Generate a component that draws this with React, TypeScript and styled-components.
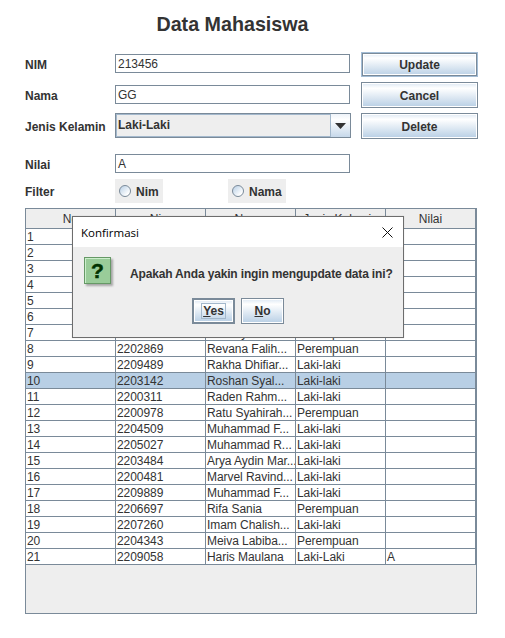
import React from "react";
import styled, { createGlobalStyle } from "styled-components";

const Global = createGlobalStyle`
  html, body {
    margin: 0;
    background: #fff;
  }
  * {
    box-sizing: border-box;
  }
`
const Page = styled.div`
  position: relative;
  width: 505px;
  height: 638px;
  padding: 0 28px 0 25px;
  font-family: "Liberation Sans", Arial, sans-serif;
  font-size: 12px;
  color: #333;
  overflow: hidden;
`
const Title = styled.h1`
  margin: 0;
  height: 52px;
  padding: 13px 37px 0 0;
  text-align: center;
  font-size: 19.7px;
  line-height: 23px;
  font-weight: bold;
  color: #333;
`
const Form = styled.div`
  display: grid;
  grid-template-columns: 90px 246px 117px;
  grid-template-rows: 25px 26px 26px;
  row-gap: 5px;
`
const Label = styled.label<{ $top: number }>`
  padding-top: ${p => p.$top}px;
  font-weight: bold;
  line-height: 14px;
`
const Field = styled.div<{ $top: number }>`
  width: 235px;
  height: 19px;
  margin-top: ${p => p.$top}px;
  padding: 1px 0 0 2px;
  border: 1px solid #7a8a99;
  line-height: 17px;
  background: #fff;
`
const Combo = styled.div`
  display: flex;
  width: 236px;
  height: 25px;
  border: 1px solid #7a8a99;
  background: #eee;
`
const ComboText = styled.div`
  flex: 1;
  padding-left: 1px;
  border: 1px solid #a3b8cc;
  font-weight: bold;
  line-height: 21px;
`
const ComboArrow = styled.div`
  display: flex;
  align-items: center;
  justify-content: center;
  width: 19px;
  background: linear-gradient(#eef3f9, #fff 25%, #c6d8ea);
`
const Button = styled.button<{ $default?: boolean }>`
  display: block;
  width: 117px;
  padding: 1px 0 0;
  border: 1px solid ${p => (p.$default ? "#a3bdd6" : "#7a8a99")};
  box-shadow: ${p => (p.$default ? "inset 0 0 0 1px #7a8a99, inset 0 0 0 2px #fff" : "inset 0 0 0 1px #fff")};
  background: linear-gradient(#dde8f3, #fff 22%, #b8cfe5);
  font: bold 12px "Liberation Sans", Arial, sans-serif;
  color: #333;
`
const NilaiRow = styled.div`
  display: grid;
  grid-template-columns: 90px 235px;
  margin-top: 15px;
`
const FilterRow = styled.div`
  display: grid;
  grid-template-columns: 90px 113px auto;
  justify-content: start;
  margin-top: 6px;
`
const RadioBox = styled.div`
  display: inline-flex;
  align-items: center;
  gap: 5px;
  justify-self: start;
  height: 24px;
  padding: 0 4px;
  background: #eee;
  font-weight: bold;
  line-height: 16px;
`
const RadioDot = styled.span`
  width: 12px;
  height: 12px;
  border: 1px solid #7a8a99;
  border-radius: 50%;
  background: linear-gradient(135deg, #b8cfe5, #fff 80%);
`
const RadioText = styled.span`
  padding-top: 1px;
`
const Pane = styled.div`
  width: 452px;
  height: 406px;
  margin-top: 5px;
  border: 1px solid #7a8a99;
  background: #eee;
`
const Grid = styled.table`
  border-spacing: 0;
  table-layout: fixed;
  width: 450px;
  font-size: 12px;
  color: #333;
`
const Head = styled.th`
  width: 90px;
  height: 20px;
  padding: 1px 0 0;
  border-right: 1px solid #7a8a99;
  border-bottom: 1px solid #7a8a99;
  background: #eee;
  font-weight: normal;
  text-align: center;
`
const Row = styled.tr<{ $selected?: boolean }>`
  background: ${p => (p.$selected ? "#b8cfe5" : "#fff")};
`
const Cell = styled.td`
  height: 16px;
  padding: 1px 0 0 1px;
  border-right: 1px solid #7a8a99;
  border-bottom: 1px solid #7a8a99;
  line-height: 14px;
  letter-spacing: -0.05px;
  white-space: nowrap;
  overflow: hidden;
`
const Dialog = styled.div`
  position: absolute;
  left: 72px;
  top: 216px;
  width: 332px;
  height: 122px;
  border: 1px solid #6d6d6d;
  background: #eee;
  box-shadow: 0 0 1px rgba(0, 0, 0, 0.2);
`
const DialogBar = styled.div`
  display: flex;
  align-items: center;
  justify-content: space-between;
  height: 30px;
  padding: 0 10px 0 8px;
  background: #fff;
  font-family: "Open Sans", "Noto Sans", sans-serif;
  font-size: 11.5px;
  color: #000;
`
const DialogBody = styled.div`
  display: flex;
  align-items: flex-start;
  height: 51px;
  padding: 10px 0 0 11px;
`
const Question = styled.div`
  display: flex;
  align-items: center;
  justify-content: center;
  width: 27px;
  height: 27px;
  border: 1px solid #669966;
  box-shadow: inset 1px 1px 0 #cceecc, 2px 2px 2px rgba(0, 0, 0, 0.3);
  background: #99cc99;
  font: bold 21px "Liberation Sans", Arial, sans-serif;
  -webkit-text-stroke: 0.5px #003300;
  color: #003300;
`
const Message = styled.div`
  margin: 10px 0 0 19px;
  font-weight: bold;
  line-height: 14px;
  letter-spacing: -0.16px;
  white-space: nowrap;
`
const DialogButtons = styled.div`
  display: flex;
  justify-content: center;
  gap: 6px;
`
const SmallButton = styled.button<{ $focus?: boolean }>`
  display: flex;
  align-items: center;
  justify-content: center;
  width: 43px;
  height: 26px;
  padding: 0;
  border: ${p => (p.$focus ? "2px solid #7a8a99" : "1px solid #7a8a99")};
  box-shadow: inset 0 0 0 1px #fff;
  background: linear-gradient(#dde8f3, #fff 22%, #b8cfe5);
  font: bold 12px "Liberation Sans", Arial, sans-serif;
  color: #333;
`
const FocusBox = styled.span<{ $focus?: boolean }>`
  padding: 0 1px;
  border: 1px solid ${p => (p.$focus ? "#a3b8cc" : "transparent")};
  line-height: 14px;
`

const rows = [
  ["1", "2201234", "Adam Pratama", "Laki-laki", ""],
  ["2", "2201567", "Bagas Nugraha", "Laki-laki", ""],
  ["3", "2202345", "Citra Lestari", "Perempuan", ""],
  ["4", "2203456", "Dimas Saputra", "Laki-laki", ""],
  ["5", "2204678", "Eka Putri", "Perempuan", ""],
  ["6", "2205789", "Fajar Ramadhan", "Laki-laki", ""],
  ["7", "2206890", "Nisa Ayu Gita", "Perempuan", ""],
  ["8", "2202869", "Revana Falih...", "Perempuan", ""],
  ["9", "2209489", "Rakha Dhifiar...", "Laki-laki", ""],
  ["10", "2203142", "Roshan Syal...", "Laki-laki", ""],
  ["11", "2200311", "Raden Rahm...", "Laki-laki", ""],
  ["12", "2200978", "Ratu Syahirah...", "Perempuan", ""],
  ["13", "2204509", "Muhammad F...", "Laki-laki", ""],
  ["14", "2205027", "Muhammad R...", "Laki-laki", ""],
  ["15", "2203484", "Arya Aydin Mar...", "Laki-laki", ""],
  ["16", "2200481", "Marvel Ravind...", "Laki-laki", ""],
  ["17", "2209889", "Muhammad F...", "Laki-laki", ""],
  ["18", "2206697", "Rifa Sania", "Perempuan", ""],
  ["19", "2207260", "Imam Chalish...", "Laki-laki", ""],
  ["20", "2204343", "Meiva Labiba...", "Perempuan", ""],
  ["21", "2209058", "Haris Maulana", "Laki-Laki", "A"],
]

function App() {
  return (
    <Page>
      <Global />
      <Title>Data Mahasiswa</Title>
      <Form>
        <Label $top={6}>NIM</Label>
        <Field $top={2}>213456</Field>
        <Button $default>Update</Button>
        <Label $top={7}>Nama</Label>
        <Field $top={3}>GG</Field>
        <Button>Cancel</Button>
        <Label $top={7}>Jenis Kelamin</Label>
        <Combo>
          <ComboText>Laki-Laki</ComboText>
          <ComboArrow>
            <svg width="11" height="6" viewBox="0 0 11 6">
              <path d="M0 0h11L5.5 6z" fill="#333" />
            </svg>
          </ComboArrow>
        </Combo>
        <Button>Delete</Button>
      </Form>
      <NilaiRow>
        <Label $top={4}>Nilai</Label>
        <Field $top={0}>A</Field>
      </NilaiRow>
      <FilterRow>
        <Label $top={6}>Filter</Label>
        <RadioBox>
          <RadioDot />
          <RadioText>Nim</RadioText>
        </RadioBox>
        <RadioBox>
          <RadioDot />
          <RadioText>Nama</RadioText>
        </RadioBox>
      </FilterRow>
      <Pane>
        <Grid>
          <thead>
            <tr>
              <Head>No</Head>
              <Head>Nim</Head>
              <Head>Nama</Head>
              <Head>Jenis Kelamin</Head>
              <Head>Nilai</Head>
            </tr>
          </thead>
          <tbody>
            {rows.map(r => (
              <Row key={r[0]} $selected={r[0] === "10"}>
                {r.map((c, i) => (
                  <Cell key={i}>{c}</Cell>
                ))}
              </Row>
            ))}
          </tbody>
        </Grid>
      </Pane>
      <Dialog>
        <DialogBar>
          Konfirmasi
          <svg width="11" height="11" viewBox="0 0 11 11">
            <path d="M0.5 0.5l10 10M10.5 0.5l-10 10" stroke="#111" strokeWidth="1" fill="none" />
          </svg>
        </DialogBar>
        <DialogBody>
          <Question>?</Question>
          <Message>Apakah Anda yakin ingin mengupdate data ini?</Message>
        </DialogBody>
        <DialogButtons>
          <SmallButton $focus>
            <FocusBox $focus>
              <u>Y</u>es
            </FocusBox>
          </SmallButton>
          <SmallButton>
            <FocusBox>
              <u>N</u>o
            </FocusBox>
          </SmallButton>
        </DialogButtons>
      </Dialog>
    </Page>
  );
}
export default App;
